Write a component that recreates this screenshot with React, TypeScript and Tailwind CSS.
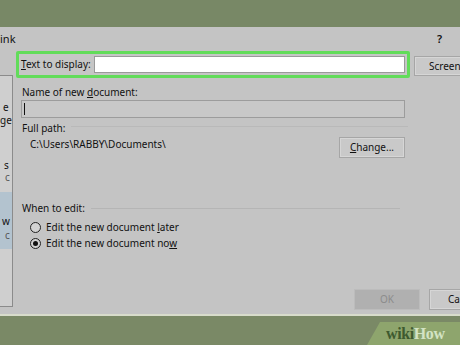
import React from 'react'

const font = { fontFamily: '"Noto Sans", "Open Sans", sans-serif' }

const Btn = (props: { children: React.ReactNode; className?: string; disabled?: boolean }) => (
  <div
    className={
      'flex items-center justify-center border text-[10px] whitespace-nowrap ' +
      (props.disabled
        ? 'bg-[#b0b0b0] border-[#bcbcbc] text-[#8c8c8c] '
        : 'bg-[#c9c9c9] border-[#a6a6a6] shadow-[inset_0_0_0_1px_#d6d6d6] text-[#111] ') +
      (props.className || '')
    }
  >
    {props.children}
  </div>
)

const Radio = (props: { checked?: boolean; children: React.ReactNode }) => (
  <div className="flex items-center h-[16px]">
    <div className="w-[11px] h-[11px] rounded-full border border-[#222] bg-[#d2d2d2] flex items-center justify-center">
      {props.checked && <div className="w-[5px] h-[5px] rounded-full bg-[#111]" />}
    </div>
    <span className="ml-[5px] text-[10px] text-[#111]">{props.children}</span>
  </div>
)

export default function App() {
  return (
    <div className="w-[460px] h-[345px] overflow-hidden flex flex-col bg-[#7a8966]" style={font}>
      <div className="h-[27px] shrink-0 bg-[#788866]" />

      {/* dialog */}
      <div className="h-[289px] shrink-0 bg-[#c4c4c4] border-b-2 border-[#d8dccb] flex flex-col">
        <div className="h-[24px] flex items-center justify-between pr-[18px] pt-[1px]">
          <span className="text-[11px] text-[#111]">ink</span>
          <span className="text-[11px] text-[#111] font-semibold">?</span>
        </div>

        <div className="flex flex-1">
          {/* link-to sidebar, cut off */}
          <div className="w-[13px] shrink-0 mt-[24px] mb-[7px] border border-l-0 border-[#8b8b8b] bg-[#cfcfcf] flex flex-col text-[10px] text-[#111] leading-[10px] overflow-hidden">
            <div className="mt-[26px] pl-[3px]">e</div>
            <div className="mt-[3px]">ge</div>
            <div className="mt-[35px] pl-[4px]">s</div>
            <div className="mt-[2px] pl-[5px] text-[#555]">c</div>
            <div className="mt-[10px] h-[57px] bg-[#b3c3cf] flex flex-col pt-[24px]">
              <div className="pl-[2px]">w</div>
              <div className="mt-[4px] pl-[5px] text-[#555]">c</div>
            </div>
          </div>

          <div className="flex-1 min-w-0 flex flex-col ml-[3px]">
            {/* text to display */}
            <div className="flex items-start">
              <div className="w-[394px] shrink-0 h-[27px] border-[3px] border-[#62dc5a] rounded-[2px] flex items-center pl-[2px] pr-[2px] bg-[#c6c6c6]">
                <span className="text-[10px] text-[#111] whitespace-nowrap">
                  <span className="underline">T</span>ext to display:
                </span>
                <div className="ml-[3px] flex-1 h-[17px] bg-white border border-[#9a9a9a]" />
              </div>
              <Btn className="ml-[4px] mt-[5px] h-[20px] w-[60px] shrink-0 justify-start pl-[14px]">ScreenTip...</Btn>
            </div>

            <div className="mt-[7px] pl-[6px] text-[10px] text-[#111] leading-[14px]">
              Name of new <span className="underline">d</span>ocument:
            </div>
            <div className="ml-[5px] mt-[1px] w-[384px] h-[18px] border border-[#9c9c9c] bg-[#c8c8c8] flex items-center pl-[2px]">
              <div className="w-px h-[12px] bg-[#111]" />
            </div>

            <div className="flex items-center mt-[3px] pl-[6px] w-[394px]">
              <span className="text-[10px] text-[#111] leading-[14px]">Full path:</span>
              <div className="flex-1 h-px bg-[#b9b9b9] ml-[6px] mr-[2px] -mt-[4px]" />
            </div>

            <div className="flex items-center justify-between mt-[2px] w-[389px]">
              <span className="pl-[14px] text-[10px] text-[#111] -mt-[6px]">C:\Users\RABBY\Documents\</span>
              <Btn className="w-[66px] h-[21px]">
                <span>
                  <span className="underline">C</span>hange...
                </span>
              </Btn>
            </div>

            <div className="flex items-center mt-[43px] pl-[6px] w-[394px]">
              <span className="text-[10px] text-[#111] leading-[14px]">When to edit:</span>
              <div className="flex-1 h-px bg-[#b5b5b5] ml-[6px] mr-[10px]" />
            </div>

            <div className="flex flex-col pl-[14px] mt-[4px]">
              <Radio>
                Edit the new document <span className="underline">l</span>ater
              </Radio>
              <Radio checked>
                Edit the new document no<span className="underline">w</span>
              </Radio>
            </div>

            <div className="mt-auto mb-[4px] flex justify-end gap-[9px] -mr-[29px]">
              <Btn disabled className="w-[66px] h-[21px] shrink-0">OK</Btn>
              <Btn className="w-[60px] h-[21px] shrink-0 justify-start pl-[18px]">Cancel</Btn>
            </div>
          </div>
        </div>
      </div>

      {/* footer with logo */}
      <div className="flex-1 flex justify-end">
        <div className="mt-[6px] w-[93px] bg-[#8ea56d] [clip-path:polygon(13px_0,100%_0,100%_100%,0_100%)] flex items-center pl-[19px]">
          <span
            className="text-[16px] font-bold tracking-tight leading-none"
            style={{ fontFamily: '"Liberation Serif", "DejaVu Serif", serif' }}
          >
            <span className="text-[#3e5a2f]">wiki</span>
            <span className="text-[#d3e3c4]">How</span>
          </span>
        </div>
      </div>
    </div>
  )
}
